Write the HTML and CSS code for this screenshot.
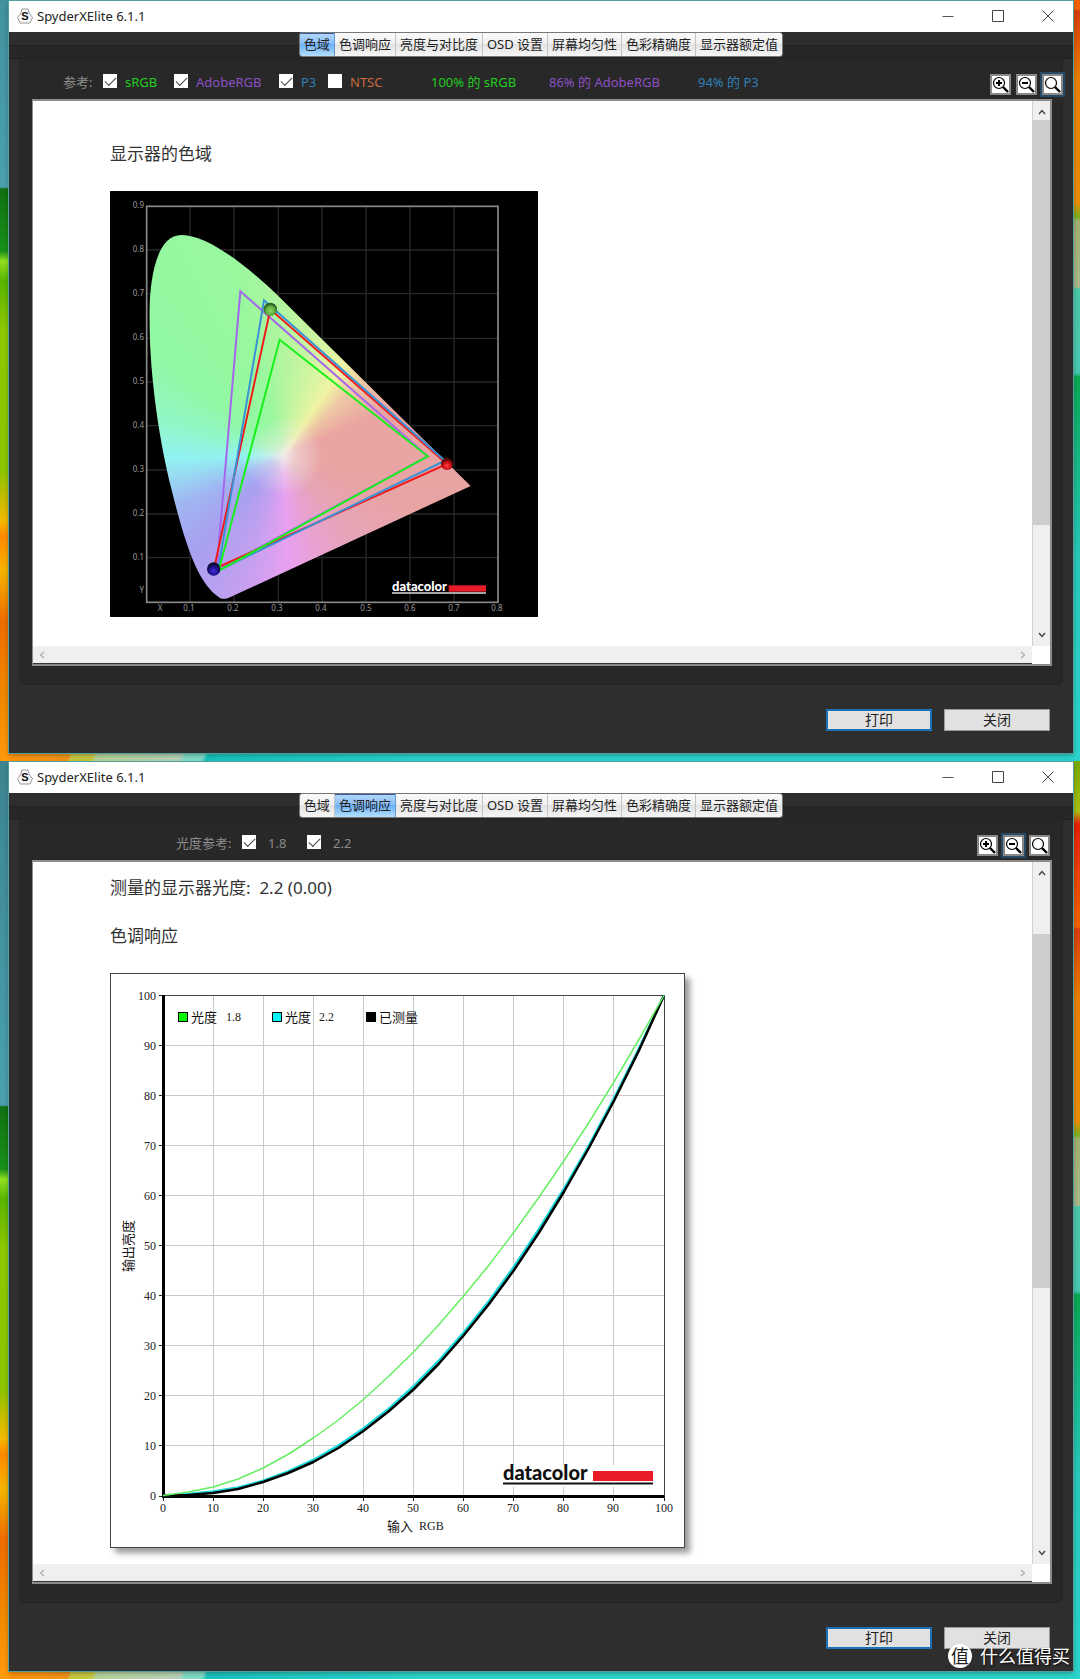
FILE: index.html
```html
<!DOCTYPE html>
<html lang="zh-CN">
<head>
<meta charset="utf-8">
<title>SpyderXElite 6.1.1</title>
<link rel="stylesheet" href="styles.css">
</head>
<body>
<svg class="defs" aria-hidden="true">
  <symbol id="min" viewBox="0 0 12 12"><path d="M0.500 6.500h11" stroke="#555"/></symbol>
  <symbol id="max" viewBox="0 0 12 12"><path d="M.5.5h11v11H.5z" fill="none" stroke="#444"/></symbol>
  <symbol id="close" viewBox="0 0 12 12"><path d="M.5.5l11 11M11.500.5l-11 11" stroke="#444"/></symbol>
  <symbol id="lens" viewBox="0 0 17 17"><circle cx="7" cy="7" r="5.500" fill="none" stroke="#000" stroke-width="1.200"/><path d="M11 11l5 5" stroke="#000" stroke-width="2.400"/></symbol>
  <symbol id="up" viewBox="0 0 8 8"><path d="M1 6l3-3.500L7 6" fill="none" stroke="currentColor" stroke-width="1.400"/></symbol>
  <symbol id="down" viewBox="0 0 8 8"><path d="M1 2l3 3.500L7 2" fill="none" stroke="currentColor" stroke-width="1.400"/></symbol>
  <symbol id="left" viewBox="0 0 8 8"><path d="M6 1L2.500 4 6 7" fill="none" stroke="currentColor" stroke-width="1.200"/></symbol>
  <symbol id="right" viewBox="0 0 8 8"><path d="M2 1l3.500 3L2 7" fill="none" stroke="currentColor" stroke-width="1.200"/></symbol>
</svg>

<section class="desktop">
  <div class="window">
    <header class="titlebar">
      <svg class="app-icon" viewBox="0 0 16 16"><path d="M5 1h6l1 4 3.500 4.500-2.500 5.500h-10l-2.500-5.500L4 5z" fill="#f8f8f8" stroke="#999"/><text x="8" y="12" text-anchor="middle" class="app-letter">S</text></svg>
      <span class="title">SpyderXElite 6.1.1</span>
      <button class="caption" aria-label="最小化"><svg><use href="#min"/></svg></button>
      <button class="caption" aria-label="最大化"><svg><use href="#max"/></svg></button>
      <button class="caption" aria-label="关闭窗口"><svg><use href="#close"/></svg></button>
    </header>
    <nav class="tabstrip"><div class="tabs">
      <button class="tab active">色域</button><button class="tab">色调响应</button><button class="tab">亮度与对比度</button><button class="tab">OSD 设置</button><button class="tab">屏幕均匀性</button><button class="tab">色彩精确度</button><button class="tab">显示器额定值</button>
    </div></nav>
    <main class="panel">
      <div class="toolbar">
        <div class="refs refs-gamut">
          <span>参考:</span>
          <label class="green"><input type="checkbox" checked>sRGB</label>
          <label class="purple"><input type="checkbox" checked>AdobeRGB</label>
          <label class="blue"><input type="checkbox" checked>P3</label>
          <label class="orange"><input type="checkbox">NTSC</label>
          <span class="green">100% 的 sRGB</span>
          <span class="purple">86% 的 AdobeRGB</span>
          <span class="blue">94% 的 P3</span>
        </div>
        <div class="tools">
          <button class="tool" aria-label="放大"><svg><use href="#lens"/><path d="M4 7h6M7 4v6" stroke="#000" stroke-width="2"/></svg></button>
          <button class="tool" aria-label="缩小"><svg><use href="#lens"/><path d="M4 7h6" stroke="#000" stroke-width="2"/></svg></button>
          <button class="tool focus" aria-label="实际大小"><svg><use href="#lens"/></svg></button>
        </div>
      </div>
      <div class="viewport">
        <article class="report report-gamut">
          <h2>显示器的色域</h2>
          <svg class="gamut" viewBox="0 0 428 426" role="img" aria-label="显示器的色域">
            <defs>
              <clipPath id="locus"><path d="M360 1254C300 1215 262 1120 215 930C170 750 148 560 148 400C150 290 170 165 245 165C330 165 460 275 535 348L1112 918L385 1254Q372 1259 360 1254"/></clipPath>
              <radialGradient id="ballG" cx=".5" cy=".6"><stop offset="0" stop-color="#8fd860"/><stop offset=".7" stop-color="#5aa83e"/><stop offset="1" stop-color="#2c5a22"/></radialGradient>
              <radialGradient id="ballR" cx=".5" cy=".65"><stop offset="0" stop-color="#ff4040"/><stop offset=".6" stop-color="#d01018"/><stop offset="1" stop-color="#600808"/></radialGradient>
              <radialGradient id="ballB" cx=".5" cy=".65"><stop offset="0" stop-color="#4828e0"/><stop offset=".6" stop-color="#1c1494"/><stop offset="1" stop-color="#0a0a38"/></radialGradient>
            </defs>
            <rect width="428" height="426" fill="#000"/>
            <g transform="scale(.33333) translate(-30 -33)">
              <path d="M270 78V1267M402 78V1267M535 78V1267M666 78V1267M798 78V1267M930 78V1267M1062 78V1267M140 210H1195M140 341H1195M140 475H1195M140 606H1195M140 737H1195M140 870H1195M140 1002H1195M140 1133H1195" stroke="#272727" stroke-width="4"/>
              <g clip-path="url(#locus)"><foreignObject x="140" y="150" width="1000" height="1120"><div class="spectrum"></div></foreignObject></g>
              <rect x="140" y="79" width="1054" height="1188" fill="none" stroke="#8a8a8a" stroke-width="5"/>
              <g fill="none" stroke-width="6">
                <path d="M421 334L983 829L350 1172Z" stroke="#a566ec"/>
                <path d="M342 1167L511 388L1041 852Z" stroke="#f01a1c"/>
                <path d="M492 361L1035 842L354 1172Z" stroke="#3a92d4"/>
                <path d="M539 479L983 829L356 1172Z" stroke="#18f01c"/>
              </g>
              <circle cx="511" cy="388" r="20" fill="url(#ballG)"/>
              <circle cx="1041" cy="852" r="18" fill="url(#ballR)"/>
              <circle cx="341" cy="1167" r="20" fill="url(#ballB)"/>
              <rect x="1046" y="1216" width="112" height="19" fill="#e81c28"/>
              <path d="M876 1239h282" stroke="#ddd" stroke-width="5"/>
            </g>
            <g class="gamut-labels" text-anchor="end">
              <text x="34" y="17">0.9</text><text x="34" y="61">0.8</text><text x="34" y="105">0.7</text><text x="34" y="149">0.6</text><text x="34" y="193">0.5</text><text x="34" y="237">0.4</text><text x="34" y="281">0.3</text><text x="34" y="325">0.2</text><text x="34" y="369">0.1</text><text x="34" y="402">Y</text>
            </g>
            <g class="gamut-labels" text-anchor="middle">
              <text x="50" y="420">X</text><text x="79" y="420">0.1</text><text x="123" y="420">0.2</text><text x="167" y="420">0.3</text><text x="211" y="420">0.4</text><text x="256" y="420">0.5</text><text x="300" y="420">0.6</text><text x="344" y="420">0.7</text><text x="387" y="420">0.8</text>
            </g>
            <text x="282" y="400" class="logo logo-small" fill="#fff">datacolor</text>
          </svg>
        </article>
        <div class="vbar"><svg><use href="#up"/></svg><div class="vtrack"><div class="thumb" style="height:81%"></div></div><svg><use href="#down"/></svg></div>
        <div class="hbar"><svg><use href="#left"/></svg><svg><use href="#right"/></svg></div>
        <div class="corner"></div>
      </div>
    </main>
    <footer class="actions"><button class="action primary">打印</button><button class="action">关闭</button></footer>
  </div>
</section>

<section class="desktop">
  <div class="window">
    <header class="titlebar">
      <svg class="app-icon" viewBox="0 0 16 16"><path d="M5 1h6l1 4 3.500 4.500-2.500 5.500h-10l-2.500-5.500L4 5z" fill="#f8f8f8" stroke="#999"/><text x="8" y="12" text-anchor="middle" class="app-letter">S</text></svg>
      <span class="title">SpyderXElite 6.1.1</span>
      <button class="caption" aria-label="最小化"><svg><use href="#min"/></svg></button>
      <button class="caption" aria-label="最大化"><svg><use href="#max"/></svg></button>
      <button class="caption" aria-label="关闭窗口"><svg><use href="#close"/></svg></button>
    </header>
    <nav class="tabstrip"><div class="tabs">
      <button class="tab">色域</button><button class="tab active">色调响应</button><button class="tab">亮度与对比度</button><button class="tab">OSD 设置</button><button class="tab">屏幕均匀性</button><button class="tab">色彩精确度</button><button class="tab">显示器额定值</button>
    </div></nav>
    <main class="panel">
      <div class="toolbar toolbar-inset">
        <div class="refs refs-tone">
          <span>光度参考:</span>
          <label><input type="checkbox" checked><span class="value">1.8</span></label>
          <label><input type="checkbox" checked><span class="value">2.2</span></label>
        </div>
        <div class="tools">
          <button class="tool" aria-label="放大"><svg><use href="#lens"/><path d="M4 7h6M7 4v6" stroke="#000" stroke-width="2"/></svg></button>
          <button class="tool focus" aria-label="缩小"><svg><use href="#lens"/><path d="M4 7h6" stroke="#000" stroke-width="2"/></svg></button>
          <button class="tool" aria-label="实际大小"><svg><use href="#lens"/></svg></button>
        </div>
      </div>
      <div class="viewport">
        <article class="report report-tone">
          <p>测量的显示器光度:&nbsp; 2.2 (0.00)</p>
          <h2>色调响应</h2>
          <svg class="tone" viewBox="1 1 573 573" role="img" aria-label="色调响应">
            <path d="M103.500 22V523M153.500 22V523M203.500 22V523M253.500 22V523M303.500 22V523M353.500 22V523M403.500 22V523M453.500 22V523M503.500 22V523M53 72.500H554M53 122.500H554M53 172.500H554M53 222.500H554M53 272.500H554M53 322.500H554M53 372.500H554M53 422.500H554M53 472.500H554" stroke="#c9c9c9"/>
            <path d="M53 22.500H554.500V523" fill="none" stroke="#444"/>
            <path d="M49 22.500h5M49 72.500h5M49 122.500h5M49 172.500h5M49 222.500h5M49 272.500h5M49 322.500h5M49 372.500h5M49 422.500h5M49 472.500h5M49 523.500h5M53.500 523v5M103.500 523v5M153.500 523v5M203.500 523v5M253.500 523v5M303.500 523v5M353.500 523v5M403.500 523v5M453.500 523v5M503.500 523v5M554.500 523v5" stroke="#222"/>
            <path d="M53.500 22V523.500H554" fill="none" stroke="#000" stroke-width="3"/>
            <g class="curves" transform="translate(53 522.500) scale(5.010 -5)">
              <polyline stroke="#18d8dc" stroke-width="2.500" points="0,0 5,.3 10,.8 15,1.600 20,2.950 25,4.800 30,7.100 35,10 40,13.400 45,17.300 50,21.800 55,26.900 60,32.600 65,38.800 70,45.700 75,53.200 80,61.300 85,70 90,79.400 95,89.400 100,100"/>
              <polyline stroke="#000" stroke-width="2.500" points="0,0 5,.1 10,.5 15,1.300 20,2.700 25,4.500 30,6.700 35,9.500 40,12.900 45,16.800 50,21.200 55,26.300 60,32 65,38.200 70,45 75,52.500 80,60.700 85,69.500 90,78.900 95,89 100,100"/>
              <polyline stroke="#66ef62" stroke-width="1.500" points="0,0 5,.7 10,1.700 15,3.300 20,5.500 25,8.250 30,11.500 35,15.100 40,19.200 45,23.800 50,28.700 55,34.100 60,39.900 65,46 70,52.600 75,59.600 80,66.900 85,74.600 90,82.700 95,91.200 100,100"/>
            </g>
            <g class="ticks" text-anchor="end">
              <text x="46" y="27">100</text><text x="46" y="77">90</text><text x="46" y="127">80</text><text x="46" y="177">70</text><text x="46" y="227">60</text><text x="46" y="277">50</text><text x="46" y="327">40</text><text x="46" y="377">30</text><text x="46" y="427">20</text><text x="46" y="477">10</text><text x="46" y="527">0</text>
            </g>
            <g class="ticks" text-anchor="middle">
              <text x="53" y="539">0</text><text x="103" y="539">10</text><text x="153" y="539">20</text><text x="203" y="539">30</text><text x="253" y="539">40</text><text x="303" y="539">50</text><text x="353" y="539">60</text><text x="403" y="539">70</text><text x="453" y="539">80</text><text x="503" y="539">90</text><text x="554" y="539">100</text>
            </g>
            <g stroke="#000">
              <rect x="68.500" y="39.500" width="9" height="9" fill="#00f800"/>
              <rect x="162.500" y="39.500" width="9" height="9" fill="#00f8f8"/>
              <rect x="256.500" y="39.500" width="9" height="9" fill="#000"/>
            </g>
            <g class="legend">
              <text x="81" y="49">光度</text><text x="175" y="49">光度</text><text x="269" y="49">已测量</text>
              <text x="277" y="558">输入</text>
              <text transform="translate(23 273) rotate(-90)" text-anchor="middle">输出亮度</text>
            </g>
            <g class="ticks">
              <text x="116" y="48">1.8</text><text x="209" y="48">2.2</text><text x="309" y="557">RGB</text>
            </g>
            <rect x="392" y="492" width="120" height="22" fill="#fff"/>
            <text x="393" y="507" class="logo logo-large" fill="#111">datacolor</text>
            <rect x="483" y="498" width="60" height="10" fill="#e81c28"/>
            <path d="M393 510.500h150" stroke="#111" stroke-width="2"/>
          </svg>
        </article>
        <div class="vbar"><svg><use href="#up"/></svg><div class="vtrack"><div style="height:8%"></div><div class="thumb" style="height:54%"></div></div><svg><use href="#down"/></svg></div>
        <div class="hbar"><svg><use href="#left"/></svg><svg><use href="#right"/></svg></div>
        <div class="corner"></div>
      </div>
    </main>
    <footer class="actions"><button class="action primary">打印</button><button class="action">关闭</button></footer>
  </div>
  <div class="watermark"><span class="badge">值</span>什么值得买</div>
</section>
</body>
</html>
```
FILE: styles.css
```css
* { box-sizing: border-box; }
body {
  margin: 0;
  font: 13px/18px "Noto Sans", "Noto Sans CJK SC", sans-serif;
  color: #222;
}
button { font: inherit; color: inherit; padding: 0; border: 0; background: none; }
svg { display: block; }
.defs { position: absolute; width: 0; height: 0; }
.app-letter { font: bold 11px "Liberation Sans", sans-serif; fill: #111; }

.desktop {
  position: relative;
  padding: 1px 7px 8px 9px;
  background:
    linear-gradient(to top, #ff9a0c 0, #f08a00 60px, #ee6c00 140px, #f5b400 190px, #ff8a00 225px, #f5b800 240px, #8cc400 290px, #8ec800 430px, #58b400 480px, #90e020 500px, #189018 510px, #107010 572px, #4aa0b0 574px, #3c8490 920px) left top / 9px 100% no-repeat,
    linear-gradient(to top, #2ad4cc 0, #28c8bc 200px, #10b070 340px, #08a850 384px, #48c8b0 388px, #48c8a8 472px, #a8b888 474px, #a0b070 540px, #78b020 544px, #e88c00 558px, #e88000 680px, #d83c08 750px, #f06400 752px, #e42000 855px, #a8c010 868px, #78a800 918px) right top / 7px 100% no-repeat,
    linear-gradient(110deg, #ff9408 12px, #f0941a 66px, #c8c840 68px, #c8c840 88px, #b8d498 92px, #b8d4b8 170px, #80dcc8 176px, #80dcc8 192px, #18c4bc 196px, #2ad4cc 400px) left bottom / 100% 8px no-repeat,
    #6cbcc0;
}
.window {
  background: #2e2e2e;
  box-shadow: 0 0 0 1px #50a09c, 0 2px 5px #0005;
}
.titlebar { display: flex; align-items: center; height: 31px; padding: 0 0 2px 8px; background: #fff; }
.app-icon { width: 16px; height: 16px; margin-right: 4px; }
.title { flex: 1; }
.caption { width: 50px; height: 29px; display: grid; place-content: center; }
.caption svg { width: 12px; height: 12px; }

.tabstrip {
  display: flex;
  justify-content: center;
  height: 27px;
  background: linear-gradient(#2e2e2e 13px, #202020 13px, #272727 15px, #272727 25px, #202020 27px);
}
.tabs { display: flex; height: 25px; border: 1px solid #777; border-radius: 3px; overflow: hidden; }
.tab {
  padding: 0 4px 1px;
  background: linear-gradient(#fafafa, #efefef 50%, #e2e2e2 50%, #f6f6f6);
  border-right: 1px solid #c4c4c4;
}
.tab:last-child { border-right: 0; }
.tab.active { background: linear-gradient(#b4d8fa, #8cc0f8 45%, #6cb0f8 50%, #b4e0fc); border-right-color: #6098d8; box-shadow: inset 0 1px #3858a0; }

.panel {
  margin: 0 11px;
  padding: 0 10px 18px 12px;
  background: #282828;
  border-radius: 0 0 5px 5px;
  box-shadow: 0 0 0 1px #232323;
}
.toolbar { display: flex; justify-content: space-between; height: 40px; padding-top: 15px; margin-right: -11px; }
.toolbar-inset { margin-right: 2px; }
.refs { display: grid; color: #8c8c8c; white-space: nowrap; align-items: start; line-height: 16px; }
.refs-gamut { grid-template-columns: 40px 71px 105px 49px 103px 118px 149px 80px; padding-left: 31px; }
.refs-tone { grid-template-columns: 66px 65px 65px; padding-left: 144px; }
.refs label { display: flex; gap: 8px; }
.value { padding-left: 4px; }
.refs input {
  appearance: none;
  display: grid;
  place-content: center;
  width: 14px;
  height: 14px;
  margin: 0;
  background: #fff;
}
.refs input:checked::before {
  content: "";
  width: 10px;
  height: 5px;
  margin-bottom: 3px;
  border: solid #444;
  border-width: 0 0 1px 1px;
  transform: rotate(-45deg);
}
.refs .green { color: #22cc22; }
.refs .purple { color: #8c50c4; }
.refs .blue { color: #2e80b8; }
.refs .orange { color: #cc6c3c; }
.tools { display: flex; gap: 5px; }
.tool { width: 21px; height: 21px; border: 2px solid #888; background: #fff; }
.tool svg { width: 17px; height: 17px; }
.tool use { width: 17px; height: 17px; }
.tool.focus { outline: 2px solid #244a68; }

.viewport {
  display: grid;
  grid-template-columns: 1fr 18px;
  grid-template-rows: auto 18px;
  border: 2px solid #8c8c8c;
  border-width: 2px 2px 2px 1px;
  background: #fff;
}
.report { padding-left: 77px; color: #333; }
.report h2, .report p { margin: 0; font-size: 17px; line-height: 24px; font-weight: 400; }
.report-gamut { padding-top: 41px; padding-bottom: 29px; }
.report-tone { padding-top: 14px; padding-bottom: 16px; }
.report p { margin-bottom: 24px; }
.report h2 { margin-bottom: 25px; }
.gamut { width: 428px; height: 426px; }
.tone { width: 575px; height: 575px; border: 1px solid #444; box-shadow: 5px 5px 6px #0006; }

.vbar { display: flex; flex-direction: column; align-items: center; padding: 7px 0; background: #efefef; border-left: 1px solid #d0d0d0; color: #444; }
.vbar svg, .hbar svg { width: 8px; height: 8px; }
.vtrack { flex: 1; align-self: stretch; margin: 4px 0 11px; }
.thumb { background: #cdcdcd; }
.hbar { display: flex; align-items: center; justify-content: space-between; padding: 0 5px; background: #efefef; border-bottom: 1px solid #333; color: #aaa; }
.corner { background: #fff; }

.spectrum {
  width: 1000px;
  height: 1120px;
  background:
    radial-gradient(circle at 410px 678px, #f2ecec 0, #f2ecec80 40px, #f2ecec00 120px),
    conic-gradient(from 0deg at 410px 678px, #b4f5a0 0deg, #d8f5a2 22deg, #f0f2a4 34deg, #eec8a4 46deg, #eaa4a2 66deg, #e8a4a4 110deg, #e6a4b8 140deg, #e8a2d0 160deg, #e8a0f0 178deg, #c4a0f0 198deg, #a8a0f0 222deg, #a0b4f2 244deg, #92f2f2 269deg, #92f6c8 286deg, #92f8a4 308deg, #98f89e 345deg, #b4f5a0 360deg);
}
.gamut-labels { font: 8px "Noto Sans", sans-serif; fill: #999; }
.logo { font-family: Lato, sans-serif; font-weight: 900; }
.logo-small { font-size: 13px; }
.logo-large { font-size: 20px; }
.curves { fill: none; stroke-linejoin: round; }
.curves polyline { vector-effect: non-scaling-stroke; }
.ticks { font: 12px "Liberation Serif", serif; fill: #222; }
.legend { font: 13px "Noto Sans CJK SC", sans-serif; fill: #111; }

.actions { display: flex; justify-content: flex-end; gap: 12px; padding: 25px 23px 22px; }
.action { width: 106px; height: 22px; background: #e1e1e1; border: 1px solid #999; font-size: 14px; line-height: 20px; }
.action.primary { border: 2px solid #1c70b8; line-height: 18px; }

.watermark {
  position: absolute;
  right: 10px;
  bottom: 10px;
  display: flex;
  align-items: center;
  gap: 8px;
  font-size: 18px;
  line-height: 26px;
  color: #fff;
  text-shadow: 1px 1px 2px #000;
}
.badge { width: 24px; height: 24px; border-radius: 50%; background: #fff; color: #222; text-align: center; line-height: 24px; text-shadow: none; }
```
